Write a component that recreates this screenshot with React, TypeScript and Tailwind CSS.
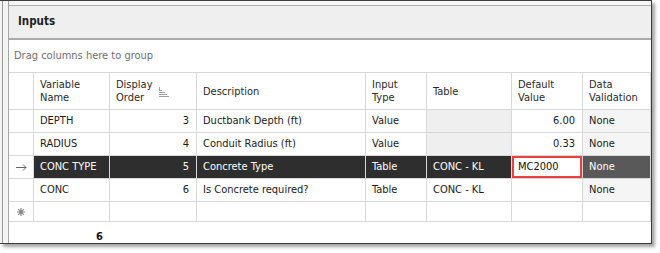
import React from "react";

const cols = ["w-[25px]", "w-[76px]", "w-[87px]", "w-[169px]", "w-[61px]", "w-[85px]", "w-[71px]", "w-[68px]"];

type Row = {
  name: string;
  order: string;
  desc: string;
  type: string;
  table: string;
  def: string;
  val: string;
  tableGray?: boolean;
};

const rows: Row[] = [
  { name: "DEPTH", order: "3", desc: "Ductbank Depth (ft)", type: "Value", table: "", def: "6.00", val: "None", tableGray: true },
  { name: "RADIUS", order: "4", desc: "Conduit Radius (ft)", type: "Value", table: "", def: "0.33", val: "None", tableGray: true },
  { name: "CONC TYPE", order: "5", desc: "Concrete Type", type: "Table", table: "CONC - KL", def: "MC2000", val: "None" },
  { name: "CONC", order: "6", desc: "Is Concrete required?", type: "Table", table: "CONC - KL", def: "", val: "None" },
];

function SortIcon() {
  return (
    <svg width="12" height="10" viewBox="0 0 12 10" className="ml-[6px] mt-[2px]">
      <rect x="1" y="0" width="1" height="3" fill="#a0a0a0" />
      <rect x="1" y="3" width="3" height="1" fill="#a0a0a0" />
      <rect x="1" y="5" width="6" height="1" fill="#a0a0a0" />
      <rect x="1" y="7" width="8" height="1" fill="#a0a0a0" />
      <rect x="1" y="9" width="10" height="1" fill="#a0a0a0" />
    </svg>
  );
}

function Arrow() {
  return (
    <svg width="11" height="7" viewBox="0 0 11 7">
      <path d="M0 3.5 H10 M7 0.5 L10 3.5 L7 6.5" stroke="#666" strokeWidth="1" fill="none" />
    </svg>
  );
}

function Star() {
  return (
    <svg width="8" height="8" viewBox="0 0 8 8">
      <path d="M4 0 V8 M0 4 H8 M1.2 1.2 L6.8 6.8 M6.8 1.2 L1.2 6.8" stroke="#8a8a8a" strokeWidth="1.2" fill="none" />
      <circle cx="4" cy="4" r="1.8" fill="#8a8a8a" />
    </svg>
  );
}

export default function App() {
  const cell = "shrink-0 border-r border-b border-[#d8d8d8] flex items-center px-[6px] whitespace-nowrap overflow-hidden";
  return (
    <div
      className="w-[660px] h-[253px] bg-white text-[11px] text-[#1b1b1b] font-stretch-condensed"
      style={{ fontFamily: '"DejaVu Sans Condensed", "DejaVu Sans", sans-serif' }}
    >
      <div className="w-[652px] h-[244px] flex border-t border-r border-b border-[#3c3c3c] shadow-[3px_3px_3px_rgba(0,0,0,0.35)] overflow-hidden">
        <div className="w-[8px] shrink-0 flex bg-[#f4f4f4] border-r border-[#a6a6a6] box-content">
          <div className="ml-[2px] w-px h-full bg-[#9c9c9c]" />
        </div>
        <div className="flex-1 flex flex-col min-w-0">
          <div className="h-[5px] shrink-0 bg-[#f7f7f7] border-b border-[#b0b0b0]" />
          <div className="h-[34px] shrink-0 bg-[#efefef] border-b-2 border-[#a9a9a9] flex items-center pl-[9px] font-bold text-[11.5px] text-[#1e1e1e]">
            Inputs
          </div>
          <div className="h-[32px] shrink-0 flex items-center pl-[5px] pt-[1px] text-[#6e6e78]">Drag columns here to group</div>
          <div className="flex flex-col border-t border-[#d8d8d8]">
            <div className="flex h-[37px] leading-[13px] text-[#2a2a2a]">
              <div className={`${cols[0]} ${cell}`} />
              <div className={`${cols[1]} ${cell}`}>
                <span>Variable<br />Name</span>
              </div>
              <div className={`${cols[2]} ${cell}`}>
                <span>Display<br />Order</span>
                <SortIcon />
              </div>
              <div className={`${cols[3]} ${cell}`}>Description</div>
              <div className={`${cols[4]} ${cell}`}>
                <span>Input<br />Type</span>
              </div>
              <div className={`${cols[5]} ${cell}`}>Table</div>
              <div className={`${cols[6]} ${cell}`}>
                <span>Default<br />Value</span>
              </div>
              <div className={`${cols[7]} ${cell}`}>
                <span>Data<br />Validation</span>
              </div>
            </div>
            {rows.map((r, i) => {
              const sel = i === 2;
              const dark = sel ? "bg-[#2e2e2e] text-white border-[#cfcfcf]" : "";
              return (
                <div key={r.name} className="flex h-[23px]">
                  <div className={`${cols[0]} ${cell} justify-center`}>{sel ? <Arrow /> : null}</div>
                  <div className={`${cols[1]} ${cell} ${dark}`}>{r.name}</div>
                  <div className={`${cols[2]} ${cell} ${dark} justify-end !pr-[7px]`}>{r.order}</div>
                  <div className={`${cols[3]} ${cell} ${dark}`}>{r.desc}</div>
                  <div className={`${cols[4]} ${cell} ${dark}`}>{r.type}</div>
                  <div className={`${cols[5]} ${cell} ${dark} ${r.tableGray ? "bg-[#efefef]" : ""}`}>{r.table}</div>
                  {sel ? (
                    <div className={`${cols[6]} shrink-0 border-r border-b border-[#cfcfcf] bg-[#2e2e2e] flex`}>
                      <div className="flex-1 border-2 border-[#e8413f] bg-white flex items-center pl-[4px] text-[#111]">
                        {r.def}
                      </div>
                    </div>
                  ) : (
                    <div className={`${cols[6]} ${cell} justify-end !pr-[7px]`}>{r.def}</div>
                  )}
                  <div className={`${cols[7]} ${cell} ${sel ? "bg-[#595959] text-white border-[#cfcfcf]" : "bg-[#f5f5f5]"}`}>{r.val}</div>
                </div>
              );
            })}
            <div className="flex h-[20px]">
              <div className={`${cols[0]} ${cell} justify-center`}>
                <Star />
              </div>
              {cols.slice(1).map((c, k) => (
                <div key={k} className={`${c} ${cell}`} />
              ))}
            </div>
            <div className="flex h-[21px]">
              <div className={`${cols[0]} shrink-0`} />
              <div className={`${cols[1]} shrink-0 flex items-start justify-end pt-[8px] pr-[7px] leading-[13px] font-bold text-[#111]`}>6</div>
            </div>
          </div>
        </div>
      </div>
    </div>
  );
}
